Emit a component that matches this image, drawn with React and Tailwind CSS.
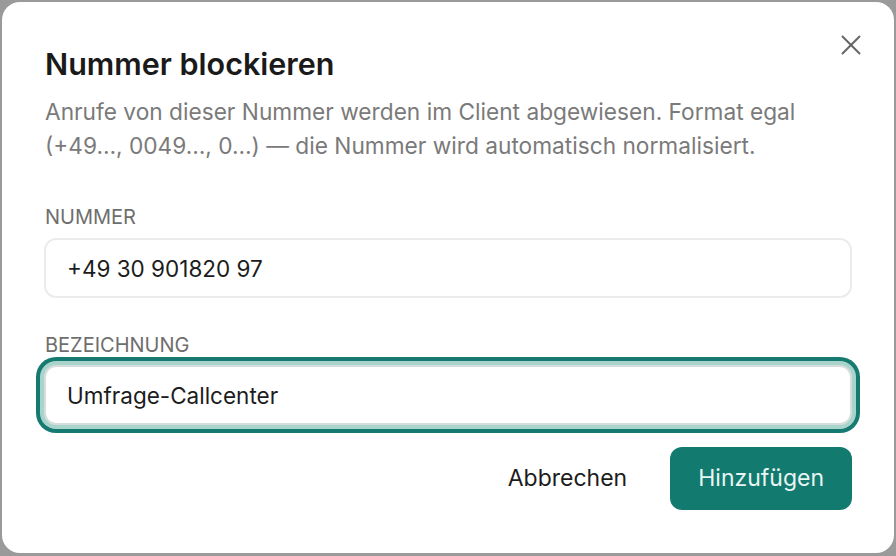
import { X } from "lucide-react"

// --- Main Component: Block number dialog ---
export default function App() {
  return (
    <div className="h-[556px] w-[896px] bg-[#9a9a9a] p-[2px] pb-[3px] font-['Inter',sans-serif]">
      <div className="relative flex h-full w-full flex-col rounded-[18px] bg-white px-[42px] pt-[44px]">
        {/* Close button */}
        <button className="absolute right-[26px] top-[26px] flex h-[34px] w-[34px] items-center justify-center text-[#666]">
          <X size={34} strokeWidth={1.4} />
        </button>

        {/* Header */}
        <h2 className="pl-[1px] text-[30.5px] font-semibold leading-[36px] text-[#1a1a1a]">Nummer blockieren</h2>
        <p className="mt-[13px] pl-[1px] text-[22.7px] leading-[34px] text-[#7a7a7a]">
          Anrufe von dieser Nummer werden im Client abgewiesen. Format egal (+49…, 0049…, 0…) — die Nummer wird automatisch normalisiert.
        </p>

        {/* Field: Nummer */}
        <label className="mt-[41px] pl-[1px] text-[20px] uppercase leading-[26px] text-[#6e6e6e]">Nummer</label>
        <input
          defaultValue="+49 30 901820 97"
          className="mt-[8px] h-[60px] w-full rounded-[12px] border-2 border-[#ececec] bg-white pl-[21px] text-[22.5px] text-[#1c1c1c] outline-none"
        />

        {/* Field: Bezeichnung (focused) */}
        <label className="mt-[34px] pl-[1px] text-[20px] uppercase leading-[26px] text-[#6e6e6e]">Bezeichnung</label>
        <input
          defaultValue="Umfrage-Callcenter"
          className="mt-[7px] h-[60px] w-full rounded-[12px] border-2 border-[#d5dedc] bg-white pl-[21px] text-[22.5px] text-[#1c1c1c] shadow-[0_0_0_4px_#a8d4cc,0_0_0_8px_#177a70] outline-none"
        />

        {/* Actions */}
        <div className="mt-[22px] flex items-center justify-end gap-[15px]">
          <button className="h-[63px] rounded-[12px] px-[28px] text-[23px] text-[#1c1c1c]">Abbrechen</button>
          <button className="h-[63px] rounded-[12px] bg-[#137a6f] px-[28px] text-[23px] text-[#e8f5f2]">Hinzufügen</button>
        </div>
      </div>
    </div>
  )
}
